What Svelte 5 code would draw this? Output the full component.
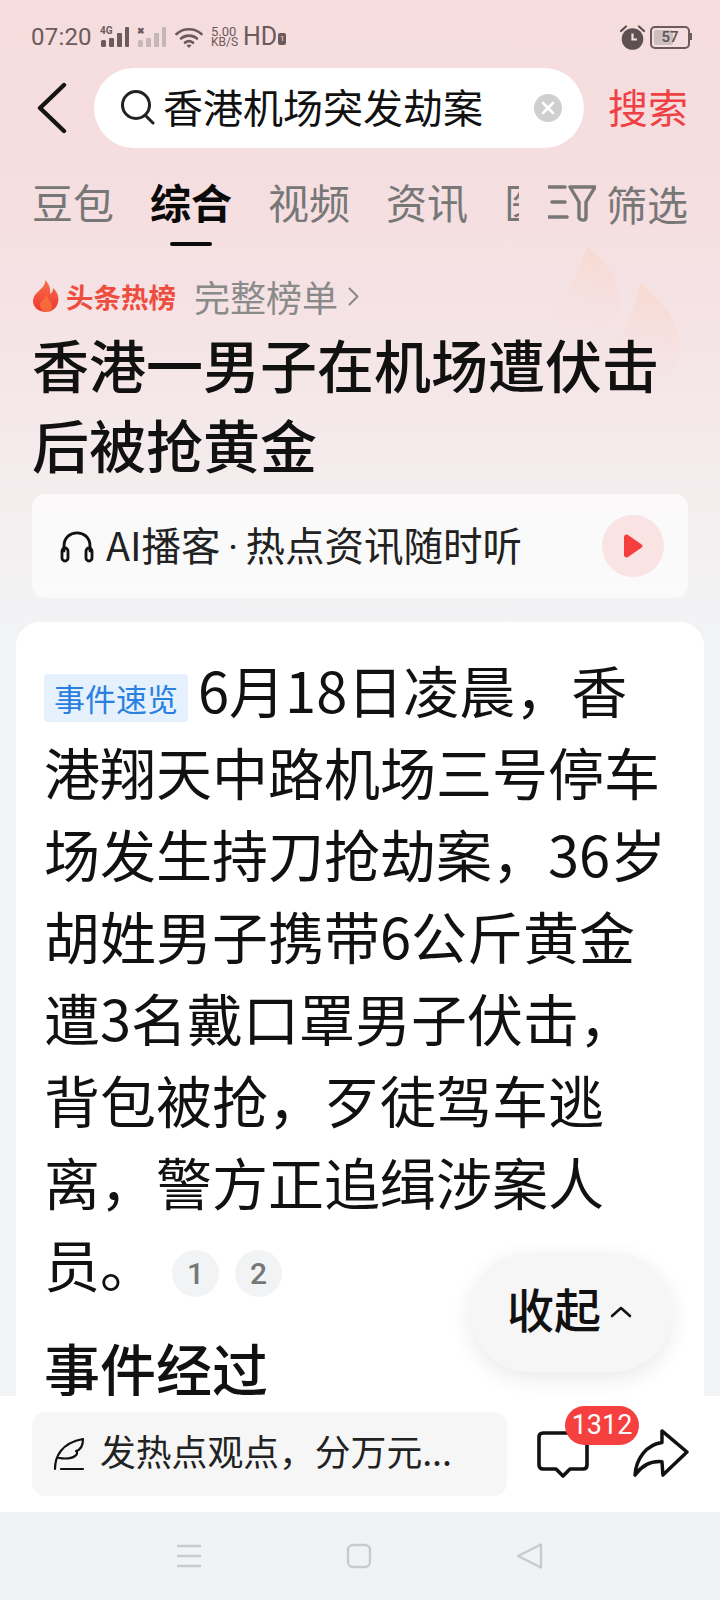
<script lang="ts">
  const tabs = ['豆包', '综合', '视频', '资讯', '医疗'];
  const active = '综合';
</script>

<div class="page">
  <div class="top">
    <svg class="flames" viewBox="0 0 140 140" aria-hidden="true">
      <defs>
        <linearGradient id="fl" x1="0.6" y1="0" x2="0.4" y2="1">
          <stop offset="0" stop-color="#f8d9d0" />
          <stop offset="1" stop-color="#f6e2e4" stop-opacity="0" />
        </linearGradient>
      </defs>
      <path d="M47 2C65 15 80 35 80 58C80 75 65 90 40 92C15 92 0 88 0 85C15 60 35 40 47 2Z" fill="url(#fl)" />
      <path d="M100 38C122 55 140 75 140 105C140 125 125 140 100 140C75 140 60 120 60 108C80 100 95 70 100 38Z" fill="url(#fl)" />
    </svg>

    <div class="status">
      <span class="time">07:20</span>
      <span class="sig">
        <i class="net">4G</i>
        <svg width="30" height="20" viewBox="0 0 30 20"><rect x="1" y="13" width="5" height="7" rx="1.5" /><rect x="9" y="11" width="5" height="9" rx="1" /><rect x="17" y="6" width="5" height="14" rx="1" /><rect x="25" y="0" width="4" height="20" rx="1" /></svg>
      </span>
      <span class="sig off">
        <i class="net">✖</i>
        <svg width="30" height="20" viewBox="0 0 30 20"><rect x="1" y="13" width="5" height="7" rx="1.5" /><rect x="9" y="11" width="5" height="9" rx="1" /><rect x="17" y="6" width="5" height="14" rx="1" /><rect x="25" y="0" width="4" height="20" rx="1" /></svg>
      </span>
      <svg class="wifi" width="28" height="21" viewBox="0 0 28 21" fill="none" stroke="#6c5a5c" stroke-width="2.6" stroke-linecap="round">
        <path d="M1.5 7C8.5 0.6 19.5 0.6 26.5 7" />
        <path d="M6 11.5C10.5 7.6 17.5 7.6 22 11.5" />
        <path d="M10 15.6C12.4 13.8 15.6 13.8 18 15.6" />
        <path d="M14 21L11.4 18.2C13 17.2 15 17.2 16.6 18.2Z" fill="#6c5a5c" stroke="none" />
      </svg>
      <span class="speed"><b>5.00</b><b>KB/S</b></span>
      <span class="hd">HD<i>1</i></span>
      <span class="spacer"></span>
      <svg class="alarm" width="25" height="25" viewBox="0 0 25 25">
        <circle cx="12.5" cy="14" r="10.8" fill="#5c5052" />
        <path d="M12.5 8.5V14.5H17" fill="none" stroke="#f5dcdd" stroke-width="2.2" />
        <path d="M1 6L6 1.5M24 6L19 1.5" stroke="#5c5052" stroke-width="2.2" stroke-linecap="round" />
      </svg>
      <span class="battery"><span class="level"></span><span class="pct">57</span></span>
    </div>

    <div class="search-row">
      <svg class="back" width="30" height="52" viewBox="0 0 30 52" fill="none" stroke="#151515" stroke-width="4.4" stroke-linecap="round" stroke-linejoin="round">
        <path d="M27 3L3 26L27 49" />
      </svg>
      <div class="search">
        <svg class="glass" width="34" height="36" viewBox="0 0 34 36" fill="none" stroke="#222" stroke-width="3" stroke-linecap="round">
          <circle cx="15" cy="15" r="13.5" />
          <path d="M25 26L32 33" />
        </svg>
        <span class="query">香港机场突发劫案</span>
        <span class="clear">
          <svg width="14" height="14" viewBox="0 0 14 14" stroke="#fff" stroke-width="2.6" stroke-linecap="round"><path d="M2 2L12 12M12 2L2 12" /></svg>
        </span>
      </div>
      <span class="go">搜索</span>
    </div>

    <div class="tab-row">
      <div class="tabs">
        {#each tabs as t}
          <span class="tab" class:on={t === active}>{t}</span>
        {/each}
      </div>
      <div class="filter">
        <svg width="48" height="38" viewBox="0 0 48 38" fill="none" stroke="#777" stroke-width="3.6" stroke-linecap="round" stroke-linejoin="round">
          <path d="M1 3H17M4 18H17M1 33H19" />
          <path d="M22 3H47L38 18V33C38 37 33 37 31 34L31 18Z" stroke-width="3.4" />
        </svg>
        <span>筛选</span>
      </div>
    </div>

    <div class="hot">
      <svg width="27" height="32" viewBox="0 0 27 32">
        <defs>
          <linearGradient id="fire" x1="0.5" y1="0" x2="0.5" y2="1">
            <stop offset="0" stop-color="#f8724a" />
            <stop offset="1" stop-color="#ee3430" />
          </linearGradient>
        </defs>
        <path d="M13 0C14 6 8 9 3 15C-2 23 3 31 13 32C22 32 28 25 26 16C25 12 23 10 21 8C21 11 20 13 18 14C19 9 17 3 13 0Z" fill="url(#fire)" />
        <path d="M14 15C14 19 8 21 8 25C8 29 11 32 14 32C18 32 21 29 20 25C19 22 16 19 14 15Z" fill="#f9853d" opacity="0.6" />
      </svg>
      <span class="hot-name">头条热榜</span>
      <span class="hot-all">完整榜单</span>
      <svg class="hot-arrow" width="11" height="19" viewBox="0 0 11 19" fill="none" stroke="#888" stroke-width="2" stroke-linecap="round" stroke-linejoin="round"><path d="M1.5 1.5L9.5 9.5L1.5 17.5" /></svg>
    </div>

    <h1>香港一男子在机场遭伏击后被抢黄金</h1>

    <div class="podcast">
      <svg width="34" height="34" viewBox="0 0 34 34" fill="none" stroke="#111" stroke-width="2.8" stroke-linecap="round">
        <path d="M4 22V17C4 -0.5 30 -0.5 30 17V22" />
        <rect x="2" y="19" width="6" height="13" rx="3" />
        <rect x="26" y="19" width="6" height="13" rx="3" />
      </svg>
      <span class="podcast-text">AI播客<span class="dot">·</span>热点资讯随时听</span>
      <span class="play">
        <svg width="20" height="24" viewBox="0 0 20 24"><path d="M1 3C1 1 3 0 5 1L18 10C20 11 20 13 18 14L5 23C3 24 1 23 1 21Z" fill="#f53f3f" /></svg>
      </span>
    </div>
  </div>

  <div class="content">
    <article class="card">
      <p class="summary"><span class="tag">事件速览</span>6月18日凌晨，香港翔天中路机场三号停车场发生持刀抢劫案，36岁胡姓男子携带6公斤黄金遭3名戴口罩男子伏击，背包被抢，歹徒驾车逃离，警方正追缉涉案人员。<span class="refs"><span class="ref">1</span><span class="ref">2</span></span></p>
      <h2>事件经过</h2>
    </article>
    <div class="collapse">
      <span>收起</span>
      <svg width="22" height="12" viewBox="0 0 22 12" fill="none" stroke="#111" stroke-width="2.6" stroke-linecap="round" stroke-linejoin="round"><path d="M2 10L11 2L20 10" /></svg>
    </div>
  </div>

  <div class="bottom">
    <div class="input">
      <svg width="32" height="34" viewBox="0 0 32 34" fill="none" stroke="#111" stroke-width="2.2" stroke-linecap="round" stroke-linejoin="round">
        <path d="M2 32C2 20 8 6 30 2C30 10 27 13 23 14C25 15 24 18 22 19C18 22 13 22 6 21" />
        <path d="M8 32H30" />
      </svg>
      <span>发热点观点，分万元...</span>
    </div>
    <div class="comment">
      <svg width="52" height="48" viewBox="0 0 52 48" fill="none" stroke="#111" stroke-width="3.6" stroke-linejoin="round">
        <path d="M6 2H46C48.5 2 50 3.5 50 6V34C50 36.5 48.5 38 46 38H33L26 45L19 38H6C3.5 38 2 36.5 2 34V6C2 3.5 3.5 2 6 2Z" />
      </svg>
      <span class="badge">1312</span>
    </div>
    <svg class="share" width="56" height="50" viewBox="0 0 58 52" fill="none" stroke="#111" stroke-width="3.6" stroke-linejoin="round" stroke-linecap="round">
      <path d="M2 49C3 32 14 17 30 15V3L56 25L31 49L30 35C18 34 9 39 2 49Z" />
    </svg>
  </div>

  <div class="nav">
    <svg width="26" height="24" viewBox="0 0 26 24" stroke="#c9cacd" stroke-width="2.4"><path d="M1 2H25M1 12H25M1 22H25" /></svg>
    <svg width="26" height="26" viewBox="0 0 26 26" fill="none" stroke="#c9cacd" stroke-width="2.4"><rect x="2" y="2" width="22" height="22" rx="5" /></svg>
    <svg width="28" height="28" viewBox="0 0 28 28" fill="none" stroke="#c9cacd" stroke-width="2.4" stroke-linejoin="round"><path d="M25 2.5V25.5L2 14Z" /></svg>
  </div>
</div>

<style>
  :global(body) {
    margin: 0;
    background: #f2f3f5;
  }

  .page {
    width: 720px;
    height: 1600px;
    display: flex;
    flex-direction: column;
    overflow: hidden;
    font-family: "Noto Sans CJK SC", "Noto Sans", sans-serif;
    color: #111;
    background: linear-gradient(180deg, #f6dcdd 0%, #f5dfe1 14%, #f5e3e5 20%, #f4eff0 33%, #f2f3f5 39%);
  }

  .top {
    position: relative;
    padding: 0 32px;
    flex: none;
  }

  .flames {
    position: absolute;
    left: 540px;
    top: 245px;
    width: 140px;
    height: 140px;
  }

  /* status bar */
  .status {
    height: 68px;
    margin-left: -1px;
    display: flex;
    align-items: center;
    color: #6c5a5c;
    font-family: Roboto, sans-serif;
    padding-top: 6px;
    box-sizing: border-box;
  }
  .time { font-size: 24px; width: 69px; letter-spacing: 0.2px; }
  .sig { position: relative; width: 30px; height: 20px; margin-right: 7px; fill: #6c5a5c; }
  .sig svg { display: block; }
  .sig.off { fill: #c5b7b9; margin-right: 8px; }
  .sig.off .net { color: #6c5a5c; font-size: 9px; }
  .net { position: absolute; left: 0; top: -2px; font-style: normal; font-weight: 700; font-size: 10px; line-height: 12px; }
  .wifi { margin-right: 8px; }
  .speed { display: flex; flex-direction: column; width: 32px; line-height: 11px; font-size: 12px; }
  .speed b { font-weight: 400; }
  .speed b:first-child { font-size: 13px; }
  .hd { font-size: 25px; font-weight: 400; display: flex; align-items: flex-end; line-height: 24px; }
  .hd i { font-style: normal; font-size: 8px; line-height: 12px; width: 8px; height: 12px; text-align: center; background: #6c5a5c; color: #f5dcdd; border-radius: 2px; margin: 0 0 4px 1px; }
  .spacer { flex: 1; }
  .alarm { margin-right: 5px; }
  .battery {
    position: relative;
    width: 36px;
    height: 19px;
    border: 2px solid #6c5a5c;
    border-radius: 5px;
    margin-right: -2px;
    overflow: visible;
  }
  .battery::after { content: ''; position: absolute; right: -4px; top: 5px; width: 2px; height: 7px; background: #6c5a5c; }
  .level { position: absolute; left: 2px; top: 2px; bottom: 2px; width: 19px; background: #cdbfc1; border-radius: 2px; }
  .pct { position: relative; display: block; text-align: center; font-size: 15px; line-height: 19px; font-weight: 500; color: #5c5052; }

  /* search */
  .search-row { display: flex; align-items: center; height: 80px; margin-left: 5px; }
  .back { flex: none; margin-right: 27px; }
  .search {
    flex: none;
    width: 490px;
    height: 80px;
    box-sizing: border-box;
    border-radius: 40px;
    background: #fff;
    display: flex;
    align-items: center;
    padding: 0 22px 0 27px;
  }
  .glass { flex: none; margin-right: 8px; }
  .query { font-size: 40px; line-height: 56px; color: #111; flex: 1; white-space: nowrap; margin-top: -4px; }
  .clear { width: 28px; height: 28px; border-radius: 50%; background: #cfcfcf; display: flex; align-items: center; justify-content: center; }
  .go { font-size: 40px; color: #ee4045; margin-left: 24px; line-height: 56px; white-space: nowrap; margin-top: -5px; }

  /* tabs */
  .tab-row { display: flex; height: 98px; align-items: flex-start; padding-top: 19px; box-sizing: border-box; }
  .tabs { width: 487px; display: flex; gap: 36px; overflow: hidden; flex: none; }
  .tab { position: relative; flex: none; font-size: 41px; line-height: 76px; height: 83px; margin-top: -4px; color: #777; }
  .tab.on { color: #0a0a0a; font-weight: 700; }
  .tab.on::after {
    content: '';
    position: absolute;
    left: 20px;
    right: 20px;
    bottom: 0;
    height: 4px;
    border-radius: 2px;
    background: #0a0a0a;
  }
  .filter { display: flex; align-items: center; margin-left: 29px; height: 54px; color: #777; font-size: 41px; white-space: nowrap; margin-top: 9px; }
  .filter span { margin-left: 10px; line-height: 54px; }

  /* hot list */
  .hot { position: relative; display: flex; align-items: center; height: 38px; margin-top: 31px; }
  .hot-name { font-size: 27.5px; font-weight: 700; color: #ee4e40; margin-left: 7px; line-height: 38px; }
  .hot-all { font-size: 36px; color: #8a8a8a; margin-left: 18px; line-height: 38px; }
  .hot-arrow { margin-left: 10px; }

  h1 {
    position: relative;
    margin: 8px 0 0;
    font-size: 57px;
    line-height: 80px;
    font-weight: 500;
    color: #111;
    width: 640px;
  }

  .podcast {
    position: relative;
    display: flex;
    align-items: center;
    height: 104px;
    margin-top: 11px;
    padding: 0 24px 0 28px;
    width: 656px;
    box-sizing: border-box;
    border-radius: 14px;
    background: rgba(255, 255, 255, 0.66);
  }
  .podcast-text { flex: 1; font-size: 39.5px; line-height: 56px; margin-left: 12px; white-space: nowrap; color: #222; }
  .dot { display: inline-block; width: 25px; text-align: center; font-family: Roboto, sans-serif; }
  .play { width: 62px; height: 62px; border-radius: 50%; background: #f9e3e3; display: flex; align-items: center; justify-content: center; }

  /* article */
  .content { position: relative; flex: 1; min-height: 0; padding: 24px 16px 0; }
  .card {
    height: 100%;
    overflow: hidden;
    box-sizing: border-box;
    background: #fff;
    border-radius: 24px 24px 0 0;
    padding: 26px 28px 0;
  }
  .summary {
    margin: 0;
    font-size: 56px;
    line-height: 82px;
    color: #111;
    width: 626px;
  }
  .tag {
    display: inline-block;
    vertical-align: 2px;
    font-size: 31px;
    line-height: 48px;
    height: 48px;
    padding: 0 10px;
    margin: 0 10px 0 0;
    border-radius: 4px;
    background: #e5f1fc;
    color: #2a80e0;
  }
  .refs { display: inline-flex; gap: 16px; margin-left: 16px; vertical-align: 3px; }
  .ref {
    width: 47px;
    height: 47px;
    border-radius: 50%;
    background: #f2f3f5;
    color: #777;
    font-family: Roboto, sans-serif;
    font-weight: 500;
    font-size: 30px;
    line-height: 47px;
    text-align: center;
  }
  h2 { margin: 23px 0 0; font-size: 56px; line-height: 80px; font-weight: 500; color: #111; }

  .collapse {
    position: absolute;
    left: 470px;
    top: 0;
    margin-top: 655px;
    width: 202px;
    height: 119px;
    border-radius: 60px;
    background: #f6f6f7;
    box-shadow: 0 6px 22px rgba(0, 0, 0, 0.09);
    display: flex;
    align-items: center;
    padding-left: 37px;
    box-sizing: border-box;
    font-size: 47px;
    font-weight: 500;
  }
  .collapse span { margin-top: -10px; }
  .collapse svg { margin-left: 9px; margin-top: -2px; }

  /* footer */
  .bottom {
    position: relative;
    flex: none;
    height: 116px;
    background: #fff;
    display: flex;
    align-items: center;
    padding-left: 32px;
    box-sizing: border-box;
  }
  .input {
    width: 475px;
    height: 84px;
    box-sizing: border-box;
    border-radius: 14px;
    background: #f6f6f7;
    display: flex;
    align-items: center;
    padding-left: 21px;
    font-size: 35.8px;
    color: #222;
    white-space: nowrap;
  }
  .input span { margin-left: 15px; margin-top: -8px; }
  .comment { position: relative; margin-left: 30px; width: 52px; height: 48px; margin-top: 2px; }
  .comment svg { display: block; }
  .badge {
    position: absolute;
    left: 28px;
    top: -25px;
    width: 74px;
    height: 39px;
    border-radius: 20px;
    background: #f5403f;
    color: #fff;
    font-family: Roboto, sans-serif;
    font-size: 27px;
    line-height: 39px;
    text-align: center;
  }
  .share { margin-left: 44px; margin-top: -3px; }

  .nav {
    flex: none;
    height: 88px;
    background: #f1f2f4;
    display: flex;
    align-items: center;
    justify-content: space-between;
    padding: 0 176px;
    box-sizing: border-box;
  }
</style>
